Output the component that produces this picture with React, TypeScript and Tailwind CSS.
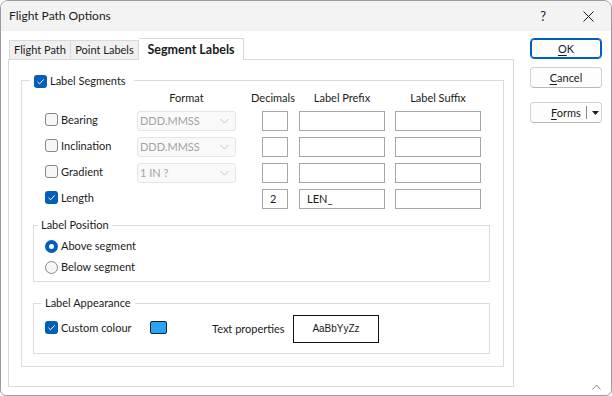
import React from "react";

const font = { fontFamily: 'Lato, "Noto Sans", sans-serif' };

function Check({ checked }: { checked?: boolean }) {
  if (checked) {
    return (
      <span className="flex h-[13px] w-[13px] shrink-0 items-center justify-center rounded-[3px] bg-[#005fb8]">
        <svg width="9" height="9" viewBox="0 0 9 9">
          <path d="M1.5 4.8 L3.6 6.8 L7.6 2.4" fill="none" stroke="#ffffff" strokeWidth="1" />
        </svg>
      </span>
    );
  }
  return <span className="h-[13px] w-[13px] shrink-0 rounded-[3px] border border-[#878787] bg-[#f7f7f7]" />;
}

function Radio({ checked }: { checked?: boolean }) {
  if (checked) {
    return (
      <span className="flex h-[13px] w-[13px] shrink-0 items-center justify-center rounded-full bg-[#005fb8]">
        <span className="h-[5px] w-[5px] rounded-full bg-white" />
      </span>
    );
  }
  return <span className="h-[13px] w-[13px] shrink-0 rounded-full border border-[#878787] bg-[#f7f7f7]" />;
}

function Select({ value }: { value: string }) {
  return (
    <div className="flex h-[20px] w-[99px] items-center justify-between rounded-[3px] border border-[#e5e5e5] bg-[#f9f9f9] pl-[2px] pr-[6px] text-[#a3a3a3]">
      <span>{value}</span>
      <svg width="9" height="6" viewBox="0 0 9 6">
        <path d="M0.5 1 L4.5 5 L8.5 1" fill="none" stroke="#c4c4c4" strokeWidth="1" />
      </svg>
    </div>
  );
}

function Box({ w, value }: { w: string; value?: string }) {
  return (
    <div className={`flex h-[20px] ${w} items-center border border-[#a6a6a6] bg-white pl-[7px] text-[#1b1b1b]`}>
      {value}
    </div>
  );
}

const rows = [
  { label: "Bearing", checked: false, format: "DDD.MMSS", dec: "", prefix: "" },
  { label: "Inclination", checked: false, format: "DDD.MMSS", dec: "", prefix: "" },
  { label: "Gradient", checked: false, format: "1 IN ?", dec: "", prefix: "" },
  { label: "Length", checked: true, format: "", dec: "2", prefix: "LEN_" },
];

export default function App() {
  return (
    <div
      className="flex h-[396px] w-[612px] flex-col overflow-hidden rounded-t-[8px] rounded-b-[6px] border border-[#9c9c9c] bg-white text-[11px] leading-[16px] text-[#1b1b1b]"
      style={font}
    >
      {/* title bar */}
      <div className="flex h-[30px] shrink-0 items-center bg-[#f3f3f3] pl-[8px]">
        <span className="text-[12px]">Flight Path Options</span>
        <span className="ml-auto mr-[37px] text-[13px]">?</span>
        <svg width="11" height="11" viewBox="0 0 11 11" className="mr-[17px]">
          <path d="M0.5 0.5 L10.5 10.5 M10.5 0.5 L0.5 10.5" stroke="#1b1b1b" strokeWidth="1" />
        </svg>
      </div>

      <div className="flex flex-1 pl-[7px]">
        {/* left column: tabs + panel */}
        <div className="flex w-[506px] flex-col pt-[7px]">
          <div className="flex h-[21px] items-end whitespace-nowrap pl-[1px]">
            <div className="flex h-[19px] w-[62px] items-center justify-center border border-b-0 border-[#d9d9d9] bg-[#f0f0f0]">
              Flight Path
            </div>
            <div className="flex h-[19px] w-[68px] items-center justify-center border border-b-0 border-l-0 border-[#d9d9d9] bg-[#f0f0f0]">
              Point Labels
            </div>
            <div className="relative z-10 -mb-[1px] flex h-[22px] w-[105px] items-center justify-center border border-b-0 border-l-0 border-[#d9d9d9] bg-white text-[12.5px] font-bold">
              Segment Labels
            </div>
          </div>

          <div className="h-[328px] border border-[#d9d9d9] bg-white pl-[12px] pt-[20px]">
            {/* Label Segments group */}
            <div className="relative h-[287px] w-[483px] border border-[#dcdcdc] pl-[23px] pt-[9px]">
              <div className="absolute -top-[8px] left-[8px] flex items-center gap-[3px] bg-white pl-[4px] pr-[8px]">
                <Check checked />
                <span>Label Segments</span>
              </div>

              <div className="flex h-[16px] whitespace-nowrap">
                <div className="w-[92px]" />
                <div className="w-[99px] text-center">Format</div>
                <div className="ml-[26px] flex w-[26px] justify-center">
                  <span className="-ml-[4px]">Decimals</span>
                </div>
                <div className="ml-[11px] w-[86px] text-center">Label Prefix</div>
                <div className="ml-[10px] w-[86px] text-center">Label Suffix</div>
              </div>

              <div className="mt-[5px] flex flex-col gap-[6px]">
                {rows.map((r) => (
                  <div key={r.label} className="flex h-[20px] items-center">
                    <div className="-mt-[3px] flex w-[92px] items-center gap-[3px]">
                      <Check checked={r.checked} />
                      <span>{r.label}</span>
                    </div>
                    <div className="w-[99px]">{r.format && <Select value={r.format} />}</div>
                    <div className="ml-[26px]">
                      <Box w="w-[26px]" value={r.dec} />
                    </div>
                    <div className="ml-[11px]">
                      <Box w="w-[86px]" value={r.prefix} />
                    </div>
                    <div className="ml-[10px]">
                      <Box w="w-[86px]" />
                    </div>
                  </div>
                ))}
              </div>

              {/* Label Position */}
              <div className="relative -ml-[12px] mt-[16px] h-[57px] w-[457px] border border-[#dcdcdc] pl-[11px] pt-[12px]">
                <div className="absolute -top-[9px] left-[4px] bg-white px-[3px]">Label Position</div>
                <div className="flex flex-col gap-[5px]">
                  <div className="flex h-[16px] items-center gap-[3px]">
                    <Radio checked />
                    <span>Above segment</span>
                  </div>
                  <div className="flex h-[16px] items-center gap-[3px]">
                    <Radio />
                    <span>Below segment</span>
                  </div>
                </div>
              </div>

              {/* Label Appearance */}
              <div className="relative -ml-[12px] mt-[21px] h-[51px] w-[457px] border border-[#dcdcdc] pl-[11px] pt-[11px]">
                <div className="absolute -top-[9px] left-[7px] bg-white px-[4px]">Label Appearance</div>
                <div className="flex h-[28px] items-center">
                  <div className="-mt-[3px] flex w-[105px] items-center gap-[3px]">
                    <Check checked />
                    <span>Custom colour</span>
                  </div>
                  <div className="-mt-[3px] h-[13px] w-[17px] rounded-[2px] border border-[#1f1f1f] bg-[#29a4f7]" />
                  <div className="ml-[45px] w-[81px] whitespace-nowrap">Text properties</div>
                  <div
                    className="flex h-[28px] w-[86px] items-center justify-center border border-[#111111] text-[10px]"
                    style={{ fontFamily: '"Liberation Sans", Arial, sans-serif' }}
                  >
                    AaBbYyZz
                  </div>
                </div>
              </div>
            </div>
          </div>
        </div>

        {/* buttons */}
        <div className="ml-[16px] flex w-[72px] flex-col pt-[7px]">
          <div className="flex h-[21px] items-center justify-center rounded-[4px] border border-[#005fb8] bg-[#fdfdfd] shadow-[inset_0_0_0_1px_#005fb8]">
            <span>
              <span className="underline underline-offset-2">O</span>K
            </span>
          </div>
          <div className="mt-[8px] flex h-[21px] items-center justify-center rounded-[4px] border border-[#d0d0d0] border-b-[#b8b8b8] bg-[#fdfdfd]">
            <span>
              <span className="underline underline-offset-2">C</span>ancel
            </span>
          </div>
          <div className="mt-[14px] flex h-[21px] items-center rounded-[4px] border border-[#d0d0d0] border-b-[#b8b8b8] bg-[#fdfdfd]">
            <span className="ml-[20px] w-[34px]">
              <span className="underline underline-offset-2">F</span>orms
            </span>
            <span className="ml-[1px] h-[13px] w-px bg-[#8a8a8a]" />
            <svg width="7" height="4" viewBox="0 0 7 4" className="ml-[5px]">
              <path d="M0 0 L7 0 L3.5 4 Z" fill="#1b1b1b" />
            </svg>
          </div>

          <div className="mt-auto mb-[5px] ml-[62px]">
            <svg width="9" height="6" viewBox="0 0 9 6">
              <path d="M0.5 5.5 L4.5 1 L8.5 5.5" fill="none" stroke="#8a8a8a" strokeWidth="1" />
            </svg>
          </div>
        </div>
      </div>
    </div>
  );
}
